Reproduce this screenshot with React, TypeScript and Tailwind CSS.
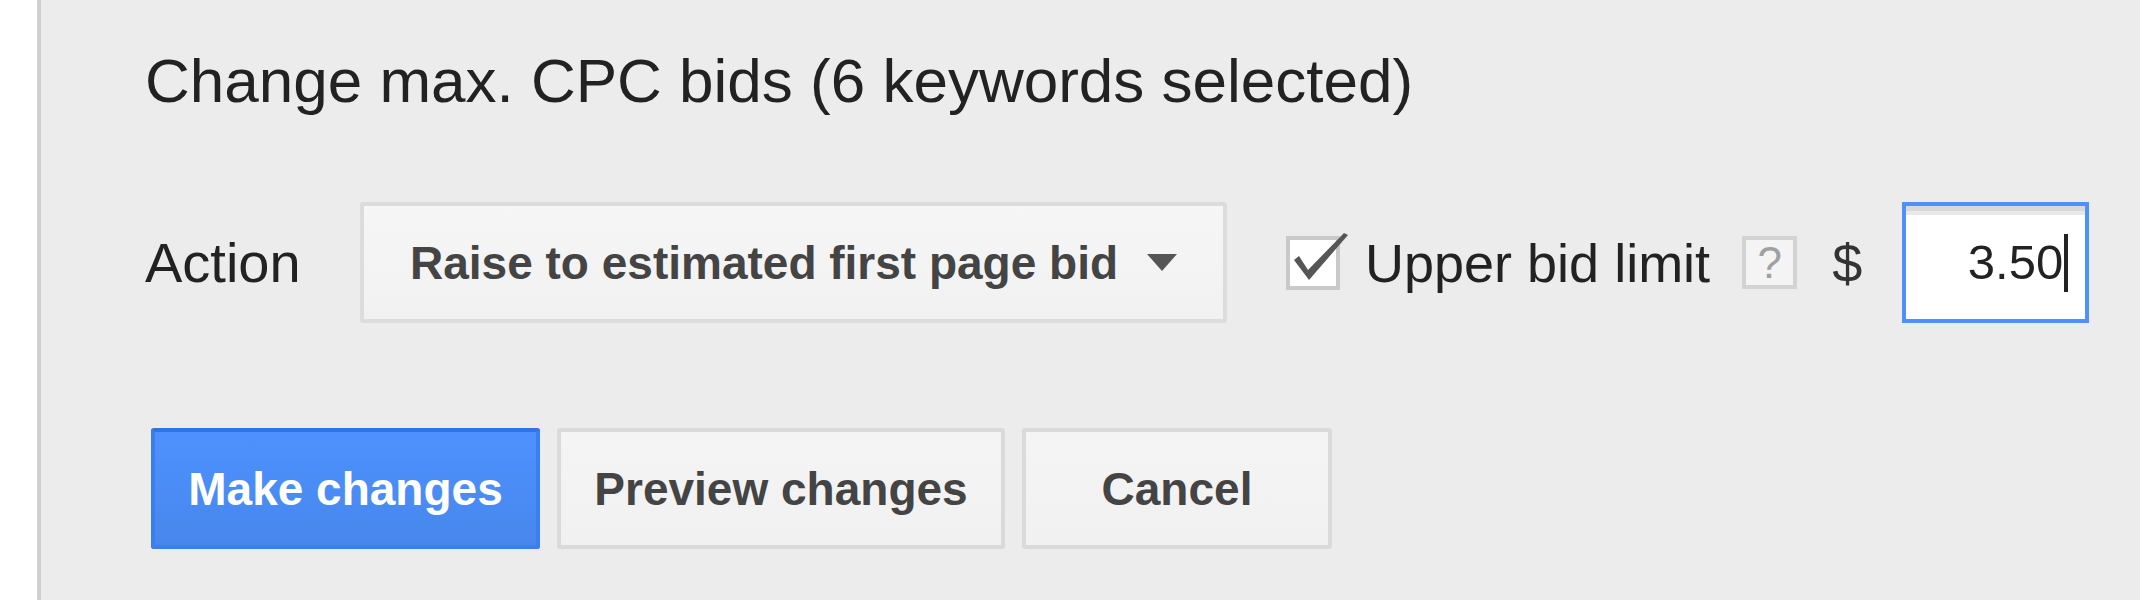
import React from "react";

export default function App() {
  return (
    <div className="flex h-[600px] w-[2140px] bg-white font-['Liberation_Sans',Arial,sans-serif]">
      <div className="w-[37px] shrink-0 bg-white" />
      <div className="w-[4px] shrink-0 bg-[#cfcfcf]" />
      <div className="flex-1 bg-[#ececec] pl-[104px] pt-[50px]">
        <div className="text-[62px] leading-none text-[#222] whitespace-nowrap">
          Change max. CPC bids (6 keywords selected)
        </div>

        <div className="mt-[90px] flex h-[121px] items-center">
          <div className="w-[215px] shrink-0 text-[56px] leading-none text-[#222]">Action</div>
          <div className="flex h-[121px] w-[867px] shrink-0 items-center rounded-[3px] border-[4px] border-[#dcdcdc] bg-linear-to-b from-[#f6f6f6] to-[#f1f1f1] pl-[46px]">
            <span className="whitespace-nowrap text-[46px] font-bold leading-none text-[#444]">
              Raise to estimated first page bid
            </span>
            <svg className="ml-[29px]" width="30" height="17" viewBox="0 0 30 17">
              <polygon points="0,0 30,0 15,17" fill="#555" />
            </svg>
          </div>

          <div className="relative ml-[59px] h-[54px] w-[54px] shrink-0 border-[4px] border-[#c9c9c9] bg-white">
            <svg
              className="absolute left-[-4px] top-[-4px] overflow-visible"
              width="54"
              height="54"
              viewBox="0 0 54 54"
            >
              <path d="M13 20 L22 34 L58 -3 L62 -1 L23 44 L8 24 Z" fill="#565656" />
            </svg>
          </div>

          <div className="ml-[25px] whitespace-nowrap text-[54px] leading-none text-[#222]">Upper bid limit</div>

          <div className="ml-[32px] flex h-[53px] w-[55px] shrink-0 items-center justify-center border-[4px] border-[#d3d3d3] bg-[#f4f4f4] text-[44px] leading-none text-[#a0a0a0]">
            ?
          </div>

          <div className="ml-[35px] text-[54px] leading-none text-[#333]">$</div>

          <div className="ml-[40px] flex h-[121px] w-[187px] shrink-0 items-center justify-end border-[4px] border-[#4d90fe] bg-white pr-[17px] shadow-[inset_0_5px_0_#d9d9d9,inset_0_9px_0_#e9e9e9]">
            <span className="text-[49px] leading-none text-[#222]">3.50</span>
            <span className="ml-[1px] h-[58px] w-[4px] bg-[#222]" />
          </div>
        </div>

        <div className="ml-[6px] mt-[105px] flex h-[121px] gap-[17px]">
          <div className="flex h-[121px] w-[389px] items-center justify-center rounded-[3px] border-[4px] border-[#3a7ff0] border-t-[#2f74e6] bg-linear-to-b from-[#4e91fe] to-[#4787ed] text-[46px] font-bold leading-none text-white">
            Make changes
          </div>
          <div className="flex h-[121px] w-[448px] items-center justify-center rounded-[3px] border-[4px] border-[#dadada] bg-linear-to-b from-[#f4f4f4] to-[#f1f1f1] text-[46px] font-bold leading-none text-[#444]">
            Preview changes
          </div>
          <div className="flex h-[121px] w-[310px] items-center justify-center rounded-[3px] border-[4px] border-[#dadada] bg-linear-to-b from-[#f4f4f4] to-[#f1f1f1] text-[46px] font-bold leading-none text-[#444]">
            Cancel
          </div>
        </div>
      </div>
    </div>
  );
}
